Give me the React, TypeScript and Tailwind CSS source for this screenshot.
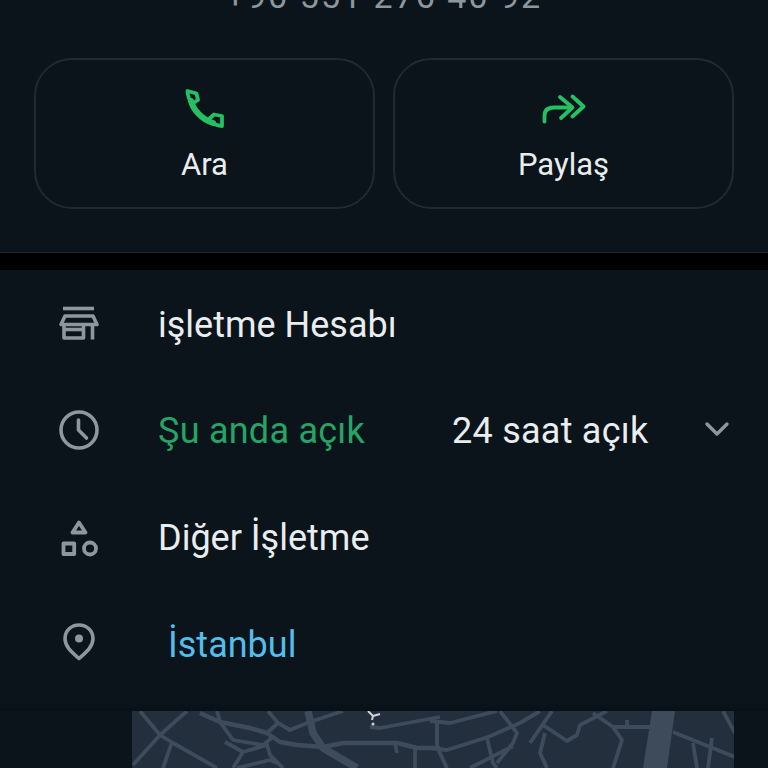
import React from 'react';

const rowText = "pt-[2px] text-[36px] leading-[42px] text-[#e9edef]";

function PhoneIcon() {
  return (
    <svg width="44" height="44" viewBox="0 0 44 44" fill="none" stroke="#25c063" strokeWidth="3.8" strokeLinejoin="round" strokeLinecap="round">
      <path d="M4.5 4 L13.5 6.5 L15 13 L9 17 C6.5 13 4.5 9 4.5 4 Z" />
      <path d="M39 39 L39 29 L31 27.5 L25 33 C29 36.5 34 38.5 39 39 Z" />
      <path d="M8 14 C10 22 18 32 30 36" strokeWidth="6" />
    </svg>
  );
}

function ShareIcon() {
  return (
    <svg width="44" height="44" viewBox="0 0 44 44" fill="none" stroke="#25c063" strokeWidth="3.8" strokeLinecap="round" strokeLinejoin="round">
      <path d="M2.5 34.5 V29 C2.5 23 6 20.5 12 20.5 H28" />
      <path d="M18 10 L30.5 20.5 L19 31" />
      <path d="M30.5 9.5 L41.5 19.5 L30.5 29.5" />
    </svg>
  );
}

function StoreIcon() {
  return (
    <svg width="44" height="44" viewBox="0 0 44 44" fill="none" stroke="#8d979e" strokeWidth="3.6" strokeLinejoin="round">
      <path d="M6 6.5 H37" />
      <path d="M4 22.5 L8 14 H36 L40 22.5 Z" />
      <path d="M7 22.5 V36 H26.5 V22.5" />
      <path d="M35.5 22.5 V37.5" />
      <path d="M8 27.5 H25" />
    </svg>
  );
}

function ClockIcon() {
  return (
    <svg width="44" height="44" viewBox="0 0 44 44" fill="none" stroke="#8d979e" strokeWidth="3.6" strokeLinecap="round" strokeLinejoin="round">
      <circle cx="22" cy="22" r="18" />
      <path d="M21.5 12 V22 L29.5 30" />
    </svg>
  );
}

function ShapesIcon() {
  return (
    <svg width="44" height="44" viewBox="0 0 44 44" fill="none" stroke="#8d979e" strokeWidth="3.8" strokeLinejoin="round">
      <path d="M22 7.5 L28.5 17.5 H15.5 Z" />
      <rect x="6.5" y="28.5" width="10.7" height="10.5" />
      <circle cx="33" cy="33.5" r="6" />
    </svg>
  );
}

function PinIcon() {
  return (
    <svg width="44" height="44" viewBox="0 0 44 44" fill="none" stroke="#8d979e" strokeWidth="3.6" strokeLinejoin="round">
      <path d="M22 37.5 C15 31.5 8 26 8 17.5 C8 9.5 14.5 4 22 4 C29.5 4 36 9.5 36 17.5 C36 26 29 31.5 22 37.5 Z" />
      <circle cx="22" cy="17.5" r="4" fill="#8d979e" stroke="none" />
    </svg>
  );
}

function MapRoads() {
  return (
    <svg width="602" height="57" viewBox="0 0 602 57" fill="none" stroke="#3e4b5a" strokeWidth="3.8" strokeLinejoin="round" className="block">
      <path d="M8 0 L28 24 L41 32 L85 57" />
      <path d="M55 0 L28 24 L1 54 M40 31 L31 57" />
      <path d="M68 2 L88 11 L118 17 L135 22 L148 31 L165 34 L191 36 L211 32 L265 32 L285 37 L308 37" strokeWidth="4.5" />
      <path d="M85 0 L88 11 L101 29 L131 34 L141 26" />
      <path d="M136 0 L146 12 L135 22 M146 12 L158 19 L175 12 L211 0" />
      <path d="M176 0 L181 22 L191 37 L225 57" strokeWidth="7.5" />
      <path d="M93 31 L111 41 L101 57 M111 41 L135 34 L138 44 L151 57 M105 57 L138 49 L145 52" />
      <path d="M238 16 L248 17 L308 6 M263 32 L265 42 M283 37 V57 M305 9 V36" />
      <path d="M298 10 L318 12 L365 0 M305 12 V36 L315 57 M298 37 L315 39 L356 26 L388 12 L408 0" />
      <path d="M368 0 L385 22 L381 32 L365 52 M355 27 L361 52 L365 57 M381 35 L338 57" />
      <path d="M420 0 L398 32 M413 22 L408 42 L415 57 M411 14 L435 30 L445 24 L448 14 L475 0" />
      <path d="M461 2 L481 16 H521 M481 16 L490 29 L481 57 M495 9 V16" />
      <polygon points="520,0 543,0 535,57 511,57" fill="#3e4b5a" stroke="none" />
      <path d="M541 21 L603 46 M580 27 L576 57 M561 32 L565 57 M591 0 L603 22" />
      <path d="M236 0 L241 5 L248 3 M241 5 L240 9" stroke="#cfd6db" strokeWidth="2" />
      <circle cx="241" cy="13" r="1.5" fill="#cfd6db" stroke="none" />
    </svg>
  );
}

export default function App() {
  return (
    <div className="h-[768px] w-[768px] overflow-hidden bg-[#0b141a] font-['Roboto',sans-serif]">
      <div className="h-[277px] border-b border-[#1e272d]">
        <div className="-mt-[24px] text-center text-[34px] leading-[40px] tracking-[2px] text-[#8d979e]">+90 551 276 40 92</div>
        <div className="mt-[42px] flex gap-[18px] px-[34px]">
          <div className="flex h-[151px] flex-1 flex-col items-center rounded-[38px] border-2 border-[#22292f] pt-[27px]">
            <PhoneIcon />
            <span className="mt-[17px] text-[31px] leading-[34px] text-[#e9edef]">Ara</span>
          </div>
          <div className="flex h-[151px] flex-1 flex-col items-center rounded-[38px] border-2 border-[#22292f] pt-[27px]">
            <ShareIcon />
            <span className="mt-[17px] text-[31px] leading-[34px] text-[#e9edef]">Paylaş</span>
          </div>
        </div>
      </div>
      <div className="h-[17px] bg-black" />
      <div className="pl-[57px] pr-[34px]">
        <div className="flex h-[107px] items-center">
          <StoreIcon />
          <span className={`ml-[57px] ${rowText}`}>işletme Hesabı</span>
        </div>
        <div className="flex h-[106px] items-center">
          <ClockIcon />
          <span className="ml-[57px] w-[294px] pt-[2px] text-[36px] leading-[42px] tracking-[0.25px] text-[#25a565]">Şu anda açık</span>
          <span className={`tracking-[0.25px] ${rowText}`}>24 saat açık</span>
          <svg className="ml-auto mr-[2px]" width="30" height="30" viewBox="0 0 30 30" fill="none" stroke="#8d979e" strokeWidth="3.4" strokeLinecap="round" strokeLinejoin="round">
            <path d="M5 9 L15 19 L25 9" />
          </svg>
        </div>
        <div className="flex h-[107px] items-center">
          <ShapesIcon />
          <span className={`ml-[57px] ${rowText}`}>Diğer İşletme</span>
        </div>
        <div className="flex h-[106px] items-center">
          <PinIcon />
          <span className="ml-[67px] pt-[4px] text-[36px] leading-[42px] text-[#53bdeb]">İstanbul</span>
        </div>
      </div>
      <div className="mt-[6px] h-[9px] bg-gradient-to-b from-[#0b141a] to-[#071016]" />
      <div className="pl-[132px] pr-[34px]">
        <div className="relative h-[57px] overflow-hidden bg-[#232f3d]">
          <MapRoads />
          <span className="absolute left-[424px] top-[53px] whitespace-nowrap text-[24px] font-bold leading-[28px] tracking-[3px] text-[#a89f86]">SERENCEBEY</span>
        </div>
      </div>
    </div>
  );
}
